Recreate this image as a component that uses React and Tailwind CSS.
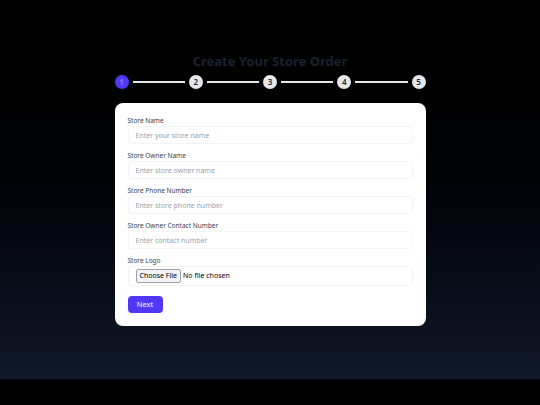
import React from 'react';

const fields = [
  { label: 'Store Name', placeholder: 'Enter your store name' },
  { label: 'Store Owner Name', placeholder: 'Enter store owner name' },
  { label: 'Store Phone Number', placeholder: 'Enter store phone number' },
  { label: 'Store Owner Contact Number', placeholder: 'Enter contact number' },
];

const Stepper = () => {
  const steps = [1, 2, 3, 4, 5];
  return (
    <div className="flex items-center w-[311px] mx-auto">
      {steps.map((s, i) => (
        <React.Fragment key={s}>
          <div
            className={
              s === 1
                ? 'w-[14px] h-[14px] rounded-full bg-indigo-600 text-[#8e87f2] flex items-center justify-center text-[8px] font-semibold shrink-0'
                : 'w-[14px] h-[14px] rounded-full bg-gray-200 text-gray-800 flex items-center justify-center text-[8px] font-semibold shrink-0'
            }
          >
            {s}
          </div>
          {i < steps.length - 1 && <div className="flex-1 h-[2px] bg-gray-200 mx-[4px]"></div>}
        </React.Fragment>
      ))}
    </div>
  );
};

const App = () => {
  return (
    <div className="min-h-screen bg-black" style={{ fontFamily: '"Noto Sans", "Open Sans", sans-serif' }}>
      <div className="h-[379px] bg-linear-to-b from-black to-gray-900 pt-[51px]">
        {/* Title */}
        <h1 className="text-center text-[13px] leading-[20px] font-bold text-[#1a2130] mb-[4px]">
          Create Your Store Order
        </h1>

        {/* Steps */}
        <Stepper />

        {/* Form card */}
        <div className="w-[311px] mx-auto mt-[14px] bg-white rounded-lg px-[13px] pt-[13px] pb-[13px]">
          <form className="flex flex-col gap-[7px]">
            {fields.map((f) => (
              <div key={f.label} className="flex flex-col">
                <label className="text-[6.5px] leading-[9px] text-gray-700 mb-[1px]">{f.label}</label>
                <input
                  type="text"
                  placeholder={f.placeholder}
                  className="h-[18px] border border-gray-100 rounded-[4px] px-[7px] text-[7px] placeholder:text-gray-400 outline-none"
                />
              </div>
            ))}
            <div className="flex flex-col">
              <label className="text-[6.5px] leading-[9px] text-gray-700 mb-[1px]">Store Logo</label>
              <input
                type="file"
                className="h-[20px] border border-gray-100 rounded-[4px] px-[7px] text-[7px] text-black file:mr-[2px] file:px-[3px] file:h-[14px] file:mt-[2px] file:border file:border-gray-400 file:bg-gray-100 file:rounded-[2px] file:text-black file:text-[7px]"
              />
            </div>
            <div className="flex mt-[3px]">
              <button
                type="button"
                className="w-[35px] h-[17px] bg-indigo-600 text-white text-[7.5px] rounded-[4px]"
              >
                Next
              </button>
            </div>
          </form>
        </div>
      </div>
    </div>
  );
};

export default App;
